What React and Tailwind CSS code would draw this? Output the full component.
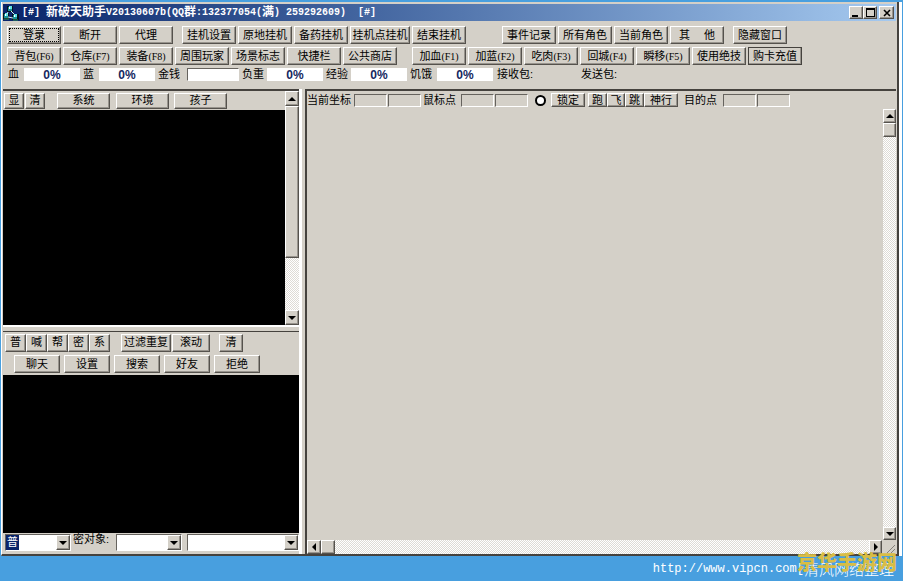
import React from "react";

const RAISED =
    "border border-t-white border-l-white border-r-[#55524d] border-b-[#55524d] shadow-[inset_-1px_-1px_0_#98948d] bg-[#d4d0c8]";
const SUNKEN = "border border-t-[#66635e] border-l-[#66635e] border-r-white border-b-white";
const TRACK = "bg-[repeating-conic-gradient(#ffffff_0_25%,#dedbd5_0_50%)] bg-size-[2px_2px]";

const mainActions = [
    { label: "登录", className: "w-[54px]", focused: true },
    { label: "断开", className: "w-[54px]" },
    { label: "代理", className: "w-[54px] mr-[7px]" },
    { label: "挂机设置", className: "w-[54px]" },
    { label: "原地挂机", className: "w-[54px]" },
    { label: "备药挂机", className: "w-[54px]" },
    { label: "挂机点挂机", className: "w-[60px]" },
    { label: "结束挂机", className: "w-[54px] mr-[34px]" },
    { label: "事件记录", className: "w-[54px]" },
    { label: "所有角色", className: "w-[54px]" },
    { label: "当前角色", className: "w-[54px]" },
    { label: "其\u3000 他", className: "w-[54px] mr-[7px]" },
    { label: "隐藏窗口", className: "w-[54px]" },
];

const shortcutActions = [
    { label: "背包", hotkey: "F6", className: "w-[54px]" },
    { label: "仓库", hotkey: "F7", className: "w-[54px]" },
    { label: "装备", hotkey: "F8", className: "w-[54px]" },
    { label: "周围玩家", className: "w-[54px]" },
    { label: "场景标志", className: "w-[54px]" },
    { label: "快捷栏", className: "w-[54px]" },
    { label: "公共商店", className: "w-[54px] mr-[13px]" },
    { label: "加血", hotkey: "F1", className: "w-[54px]" },
    { label: "加蓝", hotkey: "F2", className: "w-[54px]" },
    { label: "吃肉", hotkey: "F3", className: "w-[54px]" },
    { label: "回城", hotkey: "F4", className: "w-[54px]" },
    { label: "瞬移", hotkey: "F5", className: "w-[54px]" },
    { label: "使用绝技", className: "w-[54px]" },
    { label: "购卡充值", className: "w-[54px] outline outline-[#45423e] -outline-offset-1" },
];

const stats = [
    { id: "hp", label: "血", width: "w-4" },
    { id: "mp", label: "蓝", width: "w-4" },
    { id: "gold", label: "金钱", width: "w-[29px]", empty: true },
    { id: "load", label: "负重", width: "w-[25px]" },
    { id: "exp", label: "经验", width: "w-[25px]" },
    { id: "hunger", label: "饥饿", width: "w-[27px]" },
];

const Button = ({ label, hotkey, className = "", height = "h-[18px]", focused }) => (
    <button
        type="button"
        className={`flex shrink-0 items-center justify-center whitespace-pre leading-none ${RAISED} ${height} ${className}`}
    >
        <span className={focused ? "flex h-3 w-12 items-center justify-center outline-1 outline-dotted outline-black" : ""}>
            {label}
            {hotkey && <span className="font-['Liberation_Serif',serif] text-[10px]">({hotkey})</span>}
        </span>
    </button>
);

const arrowPaths = {
    up: "M2 8 L6 4 L10 8 Z",
    down: "M2 4 L10 4 L6 8 Z",
    left: "M8 2 L8 10 L4 6 Z",
    right: "M4 2 L4 10 L8 6 Z",
};

const Arrow = ({ direction }) => (
    <svg viewBox="0 0 12 12" className="size-3 shrink-0">
        <path d={arrowPaths[direction]} fill="#000" />
    </svg>
);

const ScrollButton = ({ direction, className = "h-[15px] w-full" }) => (
    <button
        type="button"
        aria-label={`Scroll ${direction}`}
        className={`flex shrink-0 items-center justify-center overflow-hidden ${RAISED} ${className}`}
    >
        <Arrow direction={direction} />
    </button>
);

const TitleBar = () => (
    <header className="flex h-[17px] shrink-0 items-center bg-linear-to-r from-[#0a246a] to-[#a6caf0] pr-[2px] text-white">
        <svg viewBox="0 0 16 16" className="size-4 shrink-0">
            <path d="M4 1h6v6H4zM0 8h6v6H0zM9 9h7v6H9z" fill="#06131f" />
            <path d="M5 2h4v4H5zM1 9h4v4H1zM10 10h4v4h-4z" fill="#169399" />
            <path d="M6 1h3v3H6zM2 8h3v3H2zM11 9h3v3h-3z" fill="#5fe3e6" />
            <path d="M6 2h1v2H6zM2 9h1v2H2zM11 10h1v2h-1z" fill="#fff" />
            <path d="M5 7l-1 2M8 6l3 3M5 12l5 1" stroke="#d9f7f7" fill="none" />
            <path d="M1 14h5M10 15h5" stroke="#2f8f54" fill="none" />
        </svg>
        <h1 className="ml-[3px] flex grow items-center whitespace-pre font-['Liberation_Mono','Noto_Sans_CJK_SC',monospace] text-[10px] font-bold leading-none">
            <span>[#] </span>
            <span className="text-[12px]">新破天助手</span>
            <span>V20130607b(QQ</span>
            <span className="text-[12px]">群</span>
            <span>:132377054(</span>
            <span className="text-[12px]">满</span>
            <span>) 259292609)  [#]</span>
        </h1>
        <button type="button" aria-label="Minimize" className={`flex h-[13px] w-[14px] items-end pb-px pl-[2px] ${RAISED}`}>
            <span className="h-[2px] w-[6px] bg-black" />
        </button>
        <button type="button" aria-label="Maximize" className={`flex h-[13px] w-[14px] items-center justify-center ${RAISED}`}>
            <span className="h-[9px] w-[9px] border border-t-2 border-black" />
        </button>
        <button type="button" aria-label="Close" className={`ml-[2px] flex h-[13px] w-[15px] items-center justify-center ${RAISED}`}>
            <svg viewBox="0 0 8 8" className="size-2">
                <path d="M1 1l6 6M7 1l-6 6" stroke="#000" strokeWidth="1.6" />
            </svg>
        </button>
    </header>
);

const StatsRow = () => (
    <div className="flex h-[15px] items-center pl-[5px]">
        {stats.map((stat) => (
            <div key={stat.id} className="mr-[3px] flex items-center">
                <label htmlFor={stat.id} className={`shrink-0 ${stat.width}`}>{stat.label}</label>
                <input
                    id={stat.id}
                    readOnly
                    defaultValue={stat.empty ? "" : "0%"}
                    className={`h-[13px] bg-white text-center font-['Liberation_Sans',sans-serif] text-[12px] font-bold leading-none text-[#14285f] ${stat.empty ? `w-[52px] ${SUNKEN}` : "w-14"}`}
                />
            </div>
        ))}
        <span className="ml-px w-[84px]">接收包:</span>
        <span>发送包:</span>
    </div>
);

const MessagePanel = () => (
    <section className="flex h-[238px] shrink-0 border-t-2 border-b-2 border-t-[#45423e] border-b-white">
        <div className="flex min-w-0 grow flex-col">
            <div className="flex h-[19px] shrink-0 items-center pl-px">
                <Button label="显" className="w-5" height="h-4" />
                <Button label="清" className="ml-px w-5" height="h-4" />
                <Button label="系统" className="ml-[12px] w-[53px]" height="h-4" />
                <Button label="环境" className="ml-[6px] w-[53px]" height="h-4" />
                <Button label="孩子" className="ml-[5px] w-[53px]" height="h-4" />
            </div>
            <div className="grow bg-black" />
        </div>
        <div className={`flex w-[14px] shrink-0 flex-col ${TRACK}`}>
            <ScrollButton direction="up" />
            <div className={`h-[152px] ${RAISED}`} />
            <div className="grow" />
            <ScrollButton direction="down" />
        </div>
    </section>
);

const Combo = ({ label, className, children }) => (
    <div className={`relative flex h-[17px] items-stretch bg-white ${SUNKEN} ${className}`}>
        <select
            aria-label={label}
            className={`w-full appearance-none pl-px leading-[15px] ${children ? "bg-linear-to-r from-[#0a246a] from-[13px] to-white to-[13px] text-white" : "bg-white"}`}
        >
            <option>{children}</option>
        </select>
        <span className={`pointer-events-none absolute inset-y-0 right-0 flex w-[14px] items-center justify-center ${RAISED}`}>
            <Arrow direction="down" />
        </span>
    </div>
);

const ChatPanel = () => (
    <section className="mt-[4px] flex grow flex-col border-t border-[#45423e]">
        <div className="flex h-[21px] shrink-0 items-center pl-[2px]">
            {["普", "喊", "帮", "密", "系"].map((channel) => (
                <Button key={channel} label={channel} className="w-[21px]" />
            ))}
            <Button label="过滤重复" className="ml-[11px] w-[50px]" />
            <Button label="滚动" className="ml-[1px] w-[38px]" />
            <Button label="清" className="ml-[9px] w-6" />
        </div>
        <div className="flex h-[22px] shrink-0 items-center gap-[4px] pl-[11px]">
            {["聊天", "设置", "搜索", "好友", "拒绝"].map((tab) => (
                <Button key={tab} label={tab} className="w-[46px]" />
            ))}
        </div>
        <div className="grow bg-black" />
        <div className="flex h-[21px] shrink-0 items-start pt-px pl-[2px]">
            <Combo label="频道" className="w-[66px]">普</Combo>
            <span className="w-[45px] pl-[2px]">密对象:</span>
            <Combo label="密对象" className="w-[66px]" />
            <Combo label="内容" className="ml-[5px] grow" />
        </div>
    </section>
);

const CoordField = ({ label }) => (
    <input aria-label={label} readOnly className={`h-[13px] w-[33px] bg-[#d4d0c8] ${SUNKEN}`} />
);

const MapPanel = () => (
    <section className="flex min-w-0 grow flex-col border-t-2 border-l-2 border-[#45423e]">
        <div className="flex h-[18px] shrink-0 items-center">
            <span className="w-[47px]">当前坐标</span>
            <div className="flex gap-px">
                <CoordField label="当前坐标 X" />
                <CoordField label="当前坐标 Y" />
            </div>
            <span className="ml-[2px] w-[38px]">鼠标点</span>
            <div className="flex gap-px">
                <CoordField label="鼠标点 X" />
                <CoordField label="鼠标点 Y" />
            </div>
            <input
                type="radio"
                aria-label="锁定"
                className="ml-[7px] size-[11px] appearance-none rounded-full border-2 border-black bg-white"
            />
            <Button label="锁定" className="ml-[5px] w-[34px]" height="h-[14px]" />
            <Button label="跑" className="ml-[3px] w-[19px]" height="h-[14px]" />
            <Button label="飞" className="w-[18px]" height="h-[14px]" />
            <Button label="跳" className="w-[19px]" height="h-[14px]" />
            <Button label="神行" className="w-[34px]" height="h-[14px]" />
            <span className="ml-[6px] w-[39px]">目的点</span>
            <div className="flex gap-px">
                <CoordField label="目的点 X" />
                <CoordField label="目的点 Y" />
            </div>
        </div>
        <div className="flex grow">
            <div className="grow" />
            <div className={`flex w-[13px] shrink-0 flex-col ${TRACK}`}>
                <ScrollButton direction="up" className="h-[14px] w-full" />
                <div className={`h-[14px] ${RAISED}`} />
                <div className="grow" />
                <ScrollButton direction="down" className="h-[13px] w-full" />
            </div>
        </div>
        <div className={`flex h-[14px] shrink-0 ${TRACK}`}>
            <ScrollButton direction="left" className="h-full w-[14px]" />
            <div className={`w-[14px] ${RAISED}`} />
            <div className="grow" />
            <ScrollButton direction="right" className="h-full w-[13px]" />
            <svg viewBox="0 0 14 14" className="size-[14px] shrink-0 bg-[#d4d0c8]">
                <path d="M5 13l8-8M9 13l4-4" stroke="#85817a" />
            </svg>
        </div>
    </section>
);

export default function App() {
    return (
        <div className="flex min-h-screen flex-col bg-[#489fdf] pt-[2px] pr-px pl-px font-['Liberation_Sans','Noto_Sans_CJK_SC',sans-serif] text-[11px] leading-none text-black">
            <div className="flex grow bg-white pr-[3px]">
                <main className="flex min-w-0 grow flex-col border-r-2 border-b-2 border-l border-r-[#45423e] border-b-[#45423e] border-l-white bg-[#d4d0c8] pt-[2px] pr-px pl-px">
                    <TitleBar />
                    <div className="flex flex-col pt-[5px] pb-[7px]">
                        <div className="flex h-[18px] gap-[2px] pl-[4px]">
                            {mainActions.map((action) => (
                                <Button key={action.label} {...action} />
                            ))}
                        </div>
                        <div className="mt-[3px] mb-[2px] flex h-[18px] gap-[2px] pl-[4px]">
                            {shortcutActions.map((action) => (
                                <Button key={action.label} {...action} />
                            ))}
                        </div>
                        <StatsRow />
                    </div>
                    <div className="flex grow gap-[3px]">
                        <div className="flex w-[299px] shrink-0 flex-col border-r-3 border-white">
                            <MessagePanel />
                            <ChatPanel />
                        </div>
                        <MapPanel />
                    </div>
                </main>
            </div>
            <footer className="relative flex h-[25px] shrink-0 items-center justify-end pr-[8px] whitespace-nowrap text-white">
                <a href="http://www.vipcn.com" className="font-['Liberation_Mono',monospace] text-[12px]">
                    http://www.vipcn.com[
                </a>
                <span className="font-['Noto_Sans_CJK_SC',sans-serif] text-[15px] font-light">清风网络整理</span>
                <strong className="absolute right-[5px] bottom-[8px] text-[20px] font-black leading-none text-[#d9bd45]">京华手游网</strong>
            </footer>
        </div>
    );
}
